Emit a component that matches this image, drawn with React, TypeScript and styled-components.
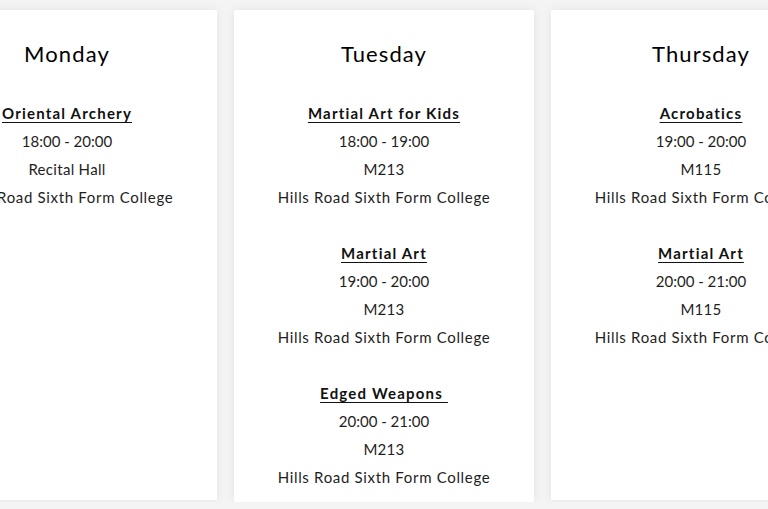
import React from "react";
import styled, { createGlobalStyle } from "styled-components";

const Global = createGlobalStyle`
  html, body { margin: 0; padding: 0; background: #f4f4f4; overflow: hidden; }
  body { font-family: Lato, "Noto Sans", sans-serif; color: #1a1a1a; }
`;

const Row = styled.div`
  display: flex;
  gap: 17px;
  margin-left: -83px;
  padding-top: 10px;
  width: 1200px;
`;

const Card = styled.section<{ $h: number }>`
  flex: 0 0 300px;
  height: ${(p) => p.$h}px;
  background: #fff;
  box-shadow: 0 0 10px rgba(0, 0, 0, 0.07);
  padding-top: 30px;
  box-sizing: border-box;
  display: flex;
  flex-direction: column;
  align-items: center;
`;

const Day = styled.h2`
  margin: 0 0 31px;
  font-size: 22px;
  line-height: 28px;
  font-weight: 400;
  letter-spacing: 0.05em;
  color: #000;
`;

const Event = styled.div`
  display: flex;
  flex-direction: column;
  align-items: center;
  margin-bottom: 28px;
`;

const Title = styled.a`
  font-size: 15px;
  line-height: 28px;
  font-weight: 700;
  letter-spacing: 0.08em;
  color: #111;
  text-decoration: underline;
  text-decoration-thickness: 1px;
  text-underline-offset: 3px;
  white-space: pre;
`;

const Line = styled.div<{ $ls: number }>`
  font-size: 15px;
  line-height: 28px;
  font-weight: 400;
  letter-spacing: ${(p) => p.$ls}em;
  color: #1e1e1e;
  white-space: nowrap;
`;

type Ev = { title: string; time: string; room: string; place: string };

const days: { name: string; h: number; events: Ev[] }[] = [
  {
    name: "Monday",
    h: 490,
    events: [
      { title: "Oriental Archery", time: "18:00 - 20:00", room: "Recital Hall", place: "Hills Road Sixth Form College" },
    ],
  },
  {
    name: "Tuesday",
    h: 492,
    events: [
      { title: "Martial Art for Kids", time: "18:00 - 19:00", room: "M213", place: "Hills Road Sixth Form College" },
      { title: "Martial Art", time: "19:00 - 20:00", room: "M213", place: "Hills Road Sixth Form College" },
      { title: "Edged Weapons ", time: "20:00 - 21:00", room: "M213", place: "Hills Road Sixth Form College" },
    ],
  },
  {
    name: "Thursday",
    h: 490,
    events: [
      { title: "Acrobatics", time: "19:00 - 20:00", room: "M115", place: "Hills Road Sixth Form College" },
      { title: "Martial Art", time: "20:00 - 21:00", room: "M115", place: "Hills Road Sixth Form College" },
    ],
  },
];

export default function App() {
  return (
    <>
      <Global />
      <Row>
        {days.map((d) => (
          <Card key={d.name} $h={d.h}>
            <Day>{d.name}</Day>
            {d.events.map((e, i) => (
              <Event key={i}>
                <Title href="#">{e.title}</Title>
                <Line $ls={0}>{e.time}</Line>
                <Line $ls={0.02}>{e.room}</Line>
                <Line $ls={0.045}>{e.place}</Line>
              </Event>
            ))}
          </Card>
        ))}
      </Row>
    </>
  );
}
